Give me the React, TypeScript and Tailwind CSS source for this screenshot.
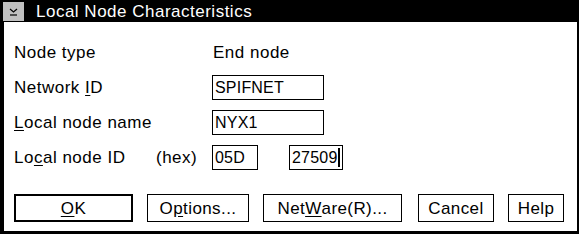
import React from 'react';

const font = { fontFamily: '"Liberation Sans", Arial, sans-serif' };

const Field = ({ value, width, cursor }: { value: string; width: string; cursor?: boolean }) => (
  <div className={`${width} h-[25px] border border-black flex items-center pl-[2px] text-[16px] tracking-[0.2px] leading-none`}>
    <span>{value}</span>
    {cursor && <div className="w-[2px] h-[19px] bg-black" />}
  </div>
);

const Button = ({ children, width, isDefault }: { children: React.ReactNode; width: string; isDefault?: boolean }) => (
  <button
    className={`${width} h-[28px] ${isDefault ? 'border-2' : 'border'} border-black bg-white flex items-center justify-center text-[17px] tracking-[0.4px] leading-none`}
  >
    {children}
  </button>
);

export default function App() {
  return (
    <div className="w-[581px] h-[237px] bg-white text-black overflow-hidden" style={font}>
      <div className="w-[579px] h-[234px] border-l-4 border-r-2 border-b-[3px] border-black flex flex-col">
        {/* Title bar */}
        <div className="h-[22px] bg-black flex items-center shrink-0">
          <div className="ml-[-1px] mt-[1px] w-[21px] h-[19px] bg-[#c0c0c0] flex items-center justify-center">
            <svg width="9" height="8" viewBox="0 0 9 8">
              <path d="M1 1 L4.5 4 L8 1" stroke="black" strokeWidth="1.2" fill="none" />
              <path d="M1 7 H8" stroke="black" strokeWidth="1.2" />
            </svg>
          </div>
          <span className="ml-[12px] text-white text-[17px] tracking-[0.5px] leading-none">
            Local Node Characteristics
          </span>
        </div>

        {/* Form */}
        <div className="pl-[10px] pt-[18px] flex flex-col gap-[10px] text-[17px] tracking-[0.5px] leading-none">
          <div className="h-[25px] flex items-center">
            <span className="w-[198px]">Node type</span>
            <span className="pl-px">End node</span>
          </div>
          <div className="h-[25px] flex items-center">
            <span className="w-[198px]">
              Network <span className="underline underline-offset-2">I</span>D
            </span>
            <Field value="SPIFNET" width="w-[112px]" />
          </div>
          <div className="h-[25px] flex items-center">
            <span className="w-[198px]">
              <span className="underline underline-offset-2">L</span>ocal node name
            </span>
            <Field value="NYX1" width="w-[112px]" />
          </div>
          <div className="h-[25px] flex items-center">
            <span className="w-[142px]">
              Lo<span className="underline underline-offset-2">c</span>al node ID
            </span>
            <span className="w-[56px]">(hex)</span>
            <Field value="05D" width="w-[46px]" />
            <div className="w-[31px]" />
            <Field value="27509" width="w-[54px]" cursor />
          </div>
        </div>

        {/* Buttons */}
        <div className="pl-[10px] mt-[24px] flex items-center">
          <Button width="w-[119px]" isDefault>
            <span className="underline underline-offset-2">O</span>K
          </Button>
          <div className="w-[14px]" />
          <Button width="w-[102px]">
            O<span className="underline underline-offset-2">p</span>tions...
          </Button>
          <div className="w-[14px]" />
          <Button width="w-[139px]">
            Net<span className="underline underline-offset-2">W</span>are(R)...
          </Button>
          <div className="w-[16px]" />
          <Button width="w-[76px]">Cancel</Button>
          <div className="w-[14px]" />
          <Button width="w-[56px]">Help</Button>
        </div>
      </div>
    </div>
  );
}
